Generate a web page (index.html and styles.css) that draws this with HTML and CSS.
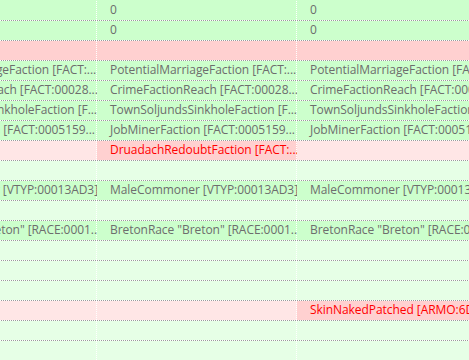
FILE: index.html
```html
<!DOCTYPE html>
<html>
<head>
<meta charset="utf-8">
<link rel="stylesheet" href="styles.css">
</head>
<body>
<div class="view">
  <div class="grid">
    <div class="cell g"><span>0</span></div><div class="cell g"><span>0</span></div><div class="cell g"><span>0</span></div>
    <div class="cell g"><span>0</span></div><div class="cell g"><span>0</span></div><div class="cell g"><span>0</span></div>
    <div class="cell p"></div><div class="cell p"></div><div class="cell p"></div>
    <div class="cell g"><span>PotentialMarriageFaction [FACT:...</span></div><div class="cell g"><span>PotentialMarriageFaction [FACT:...</span></div><div class="cell g"><span>PotentialMarriageFaction [FACT:00019809]</span></div>
    <div class="cell g"><span>CrimeFactionReach [FACT:00028...</span></div><div class="cell g"><span>CrimeFactionReach [FACT:00028...</span></div><div class="cell g"><span>CrimeFactionReach [FACT:0002816C]</span></div>
    <div class="cell g"><span>TownSoljundsSinkholeFaction [F...</span></div><div class="cell g"><span>TownSoljundsSinkholeFaction [F...</span></div><div class="cell g"><span>TownSoljundsSinkholeFaction [FACT:000E3F02]</span></div>
    <div class="cell g"><span>JobMinerFaction [FACT:0005159...</span></div><div class="cell g"><span>JobMinerFaction [FACT:0005159...</span></div><div class="cell g"><span>JobMinerFaction [FACT:00051597]</span></div>
    <div class="cell lp"></div><div class="cell p red"><span>DruadachRedoubtFaction [FACT:...</span></div><div class="cell lp"></div>
    <div class="cell lg"></div><div class="cell lg"></div><div class="cell lg"></div>
    <div class="cell g"><span>MaleCommoner [VTYP:00013AD3]</span></div><div class="cell g"><span>MaleCommoner [VTYP:00013AD3]</span></div><div class="cell g"><span>MaleCommoner [VTYP:00013AD3]</span></div>
    <div class="cell lg"></div><div class="cell lg"></div><div class="cell lg"></div>
    <div class="cell g"><span>BretonRace "Breton" [RACE:0001...</span></div><div class="cell g"><span>BretonRace "Breton" [RACE:0001...</span></div><div class="cell g"><span>BretonRace "Breton" [RACE:00013741]</span></div>
    <div class="cell lg"></div><div class="cell lg"></div><div class="cell lg"></div>
    <div class="cell lg"></div><div class="cell lg"></div><div class="cell lg"></div>
    <div class="cell lg"></div><div class="cell lg"></div><div class="cell lg"></div>
    <div class="cell lp"></div><div class="cell lp"></div><div class="cell p red"><span>SkinNakedPatched [ARMO:6D0012F4]</span></div>
    <div class="cell lg"></div><div class="cell lg"></div><div class="cell lg"></div>
    <div class="cell lg"></div><div class="cell lg"></div><div class="cell lg"></div>
    <div class="cell lg"></div><div class="cell lg"></div><div class="cell lg"></div>
  </div>
</div>
</body>
</html>
```
FILE: styles.css
```css
html, body {
  margin: 0;
  padding: 0;
  background: #e6ffe6;
}
.view {
  width: 469px;
  height: 360px;
  overflow: hidden;
  background: #ccffcc;
}
.grid {
  display: grid;
  grid-template-columns: 200px 200px 320px;
  grid-auto-rows: 20px;
  margin: 1px 0 0 -103px;
  font-family: "Open Sans", "Noto Sans", sans-serif;
  font-size: 12px;
  letter-spacing: -0.06px;
  color: #6d6d6d;
}
.cell {
  --bg: #e6ffe6;
  padding-left: 13px;
  line-height: 18px;
  white-space: nowrap;
  overflow: hidden;
  background:
    repeating-linear-gradient(180deg, #ffffff 0 1px, transparent 1px 2px) right top / 1px 100% no-repeat,
    repeating-linear-gradient(90deg, #9a9a9a 0 1px, #ffffff 1px 2px) left bottom / 100% 1px no-repeat,
    var(--bg);
}
.g { --bg: #ccffcc; }
.lg { --bg: #e6ffe6; }
.p { --bg: #ffd0d0; }
.lp { --bg: #ffe6e6; }
.red { color: #ff0000; }
```
